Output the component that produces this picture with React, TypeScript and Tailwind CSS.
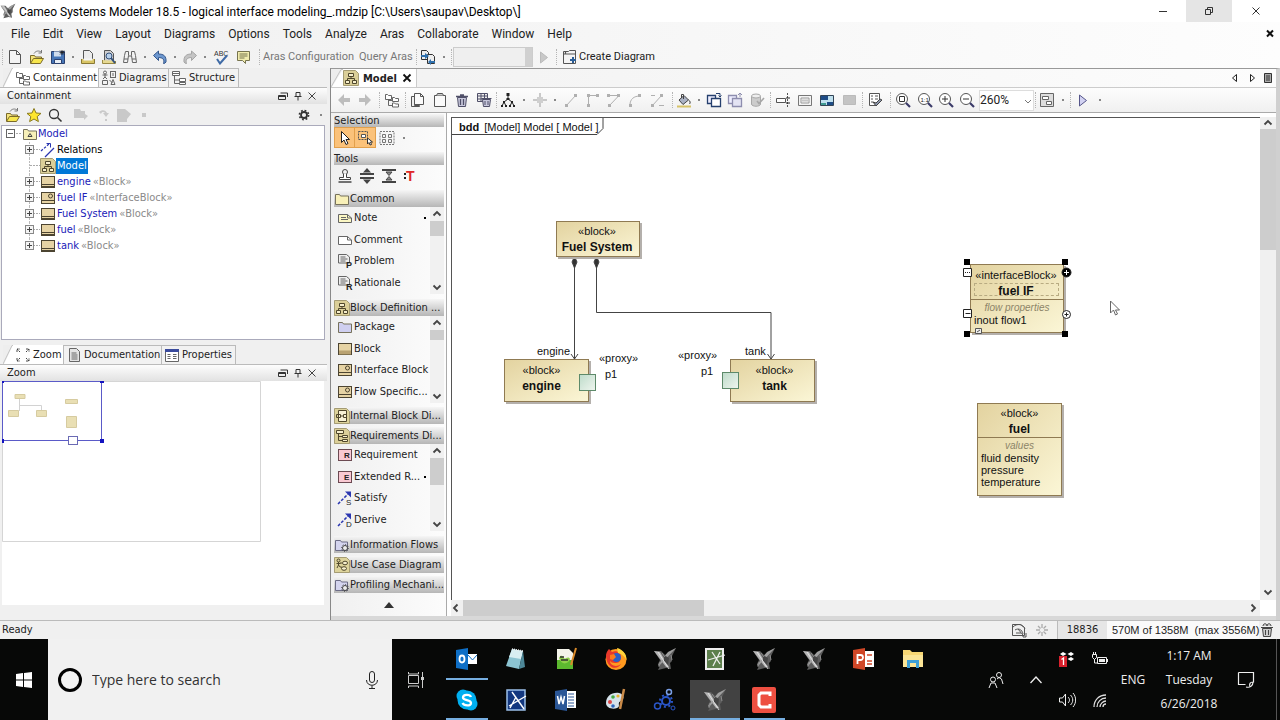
import type { ReactNode } from "react";

const UI = "font-['DejaVu_Sans_Condensed','DejaVu_Sans',sans-serif]";
const SEGOE = "font-['Open_Sans','Noto_Sans',sans-serif]";
const BAR = "font-['Roboto','Open_Sans',sans-serif]";
const ARIAL = "font-['Liberation_Sans',Arial,sans-serif]";

interface SvgProps {
  w?: number;
  h?: number;
  stroke?: string;
  className?: string;
  children: ReactNode;
}

function Svg({ w = 16, h = 16, stroke = "#555", className = "", children }: SvgProps) {
  return (
    <svg
      width={w}
      height={h}
      viewBox={`0 0 ${w} ${h}`}
      fill="none"
      stroke={stroke}
      className={`shrink-0 ${className}`}
      aria-hidden="true"
    >
      {children}
    </svg>
  );
}

/* ---------- main toolbar icons ---------- */

const NewIcon = () => (
  <Svg><path d="M2.500 1.500h7l4 4v9h-11z" fill="#f3f3f3" /><path d="M9.500 1.500v4h4" /></Svg>
);
const OpenIcon = () => (
  <Svg stroke="#7a6a2a">
    <path d="M1.500 14V6.500h4l1 1.500h6v3" fill="#f3e27c" />
    <path d="M1.500 14.500l3-5h10l-3 5z" fill="#f7e64d" />
    <path d="M5 4.500c2-3 5-3 7-1.500M12.500 1v3h-3" stroke="#777" />
  </Svg>
);
const SaveIcon = () => (
  <Svg stroke="#2b4170">
    <path d="M1.500 2.500h13v12h-13z" fill="#4676b8" />
    <path d="M4 2.500h7v5h-7z" fill="#cfdced" stroke="none" />
    <path d="M4.500 10.500h7v4h-7z" fill="#e8eef6" />
    <path d="M12 1v5M9.500 3.500h5M10 1.500l4 4M14 1.500l-4 4" stroke="#222" strokeWidth=".8" />
  </Svg>
);
const PrintIcon = () => (
  <Svg>
    <path d="M3.500 1.500h6l3 3v8h-9z" fill="#ececec" />
    <path d="M1.500 10v4.500h13V10" fill="#d9c566" stroke="#8a7a35" />
    <path d="M3.500 9.500h9v2h-9z" fill="#f4f4f4" stroke="none" />
  </Svg>
);
const PreviewIcon = () => (
  <Svg>
    <path d="M3.500 1.500h6l3 3v8h-9z" fill="#cfcfcf" />
    <path d="M1.500 11v3.500h13V12" stroke="#9a8a45" fill="#e6d991" />
    <circle cx="8" cy="7" r="3" fill="#b8d0ea" stroke="#33517c" />
    <path d="M10 9l4 5" stroke="#33517c" strokeWidth="2" />
  </Svg>
);
const FindIcon = () => (
  <Svg stroke="#666">
    <path d="M3.500 2.500h3v4l-1 7h-4l1-7zM12.500 2.500h-3v4l1 7h4l-1-7z" fill="#f2f2f2" />
    <path d="M6.500 7h3M2 10h4M10 10h4" />
  </Svg>
);
const UndoIcon = () => (
  <Svg stroke="#34578c">
    <path d="M1.500 6.500l5-4.500v3c5 0 8 2 7.500 8-.5 1-1.500 1.500-2.500 1.500 1.500-4-1-6-5-6v3z" fill="#6d97cf" />
  </Svg>
);
const RedoIcon = () => (
  <Svg stroke="#a5a5a5">
    <path d="M14.500 6.500l-5-4.500v3c-5 0-8 2-7.500 8 .5 1 1.500 1.500 2.500 1.500-1.500-4 1-6 5-6v3z" fill="#c4c4c4" />
  </Svg>
);
const SpellIcon = () => (
  <Svg stroke="#444">
    <text x="1" y="7" fontSize="7" fill="#333" stroke="none" className="font-['Liberation_Sans',sans-serif]">ABC</text>
    <path d="M4 10l3 4.500 7-8" stroke="#3f6ba6" strokeWidth="2" />
  </Svg>
);
const NoteBubbleIcon = () => (
  <Svg stroke="#77744f">
    <path d="M2.500 2.500h12v9h-4v3l-3-3h-5z" fill="#f1ecae" />
    <path d="M4.500 5h8M4.500 7h8M4.500 9h5" />
  </Svg>
);
const CompareIcon = () => (
  <Svg stroke="#333">
    <path d="M1.500 1.500h5l2 2v7h-7z" fill="#eee" />
    <path d="M7.500 5.500h5l2 2v7h-7z" fill="#eee" />
    <path d="M1 6h4V4l4 3-4 3V8H1z" fill="#2f70ad" stroke="none" />
    <path d="M15 12h-4v-2l-3 3 3 3v-2h4z" fill="#2f70ad" stroke="none" />
  </Svg>
);
const CreateDiagramIcon = () => (
  <Svg>
    <path d="M1.500 2.500h5l1-1h6v13h-12z" fill="#f4f4f4" />
    <path d="M1.500 5h12M3.500 2.500v2.500" strokeWidth="1.200" />
    <path d="M11 8v6M8 11h6" stroke="#2c5e96" strokeWidth="2" />
  </Svg>
);
const PlayIcon = ({ fill, stroke }: { fill: string; stroke: string }) => (
  <Svg stroke={stroke}><path d="M4.500 3l7 5.500-7 5.500z" fill={fill} /></Svg>
);

/* ---------- tree and tab icons ---------- */

const FoldersIcon = () => (
  <Svg stroke="#666">
    <path d="M1.500 2.500h2l1 1h3v4h-6zM8.500 5.500h2l1 1h3v3h-6zM8.500 11h2l1 1h3v3h-6z" fill="#fff" />
    <path d="M4.500 7.500v6h4M4.500 8.500h4" />
  </Svg>
);
const DiagramsIcon = () => (
  <Svg stroke="#666">
    <circle cx="4" cy="2.500" r="1.500" /><path d="M4 4v3M1.500 5h5M2 9l2-2 2 2" />
    <rect x="9.500" y="1.500" width="5" height="6" /><path d="M12 3v3" />
    <path d="M1.500 10.500h5v4h-5zM8.500 10l3 3M12 9.500l2 5h-4z" />
  </Svg>
);
const StructureIcon = () => (
  <Svg stroke="#666">
    <path d="M1.500 1.500h7v4h-7zM8.500 8.500h6v3h-6zM8.500 12.500h6v2h-6z" fill="#fff" />
    <path d="M1.500 3.500h7M3.500 5.500v8h5M3.500 10h5" />
  </Svg>
);
const StarIcon = () => (
  <Svg stroke="#8a7b1e"><path d="M8 1.500l2 4.500 5 .4-3.800 3.200 1.200 5L8 12l-4.400 2.600 1.200-5L1 6.400 6 6z" fill="#ffe62e" /></Svg>
);
const SearchIcon = () => (
  <Svg stroke="#333"><circle cx="7" cy="7" r="4.500" strokeWidth="1.300" /><path d="M10.500 10.500l4 4" strokeWidth="1.600" /></Svg>
);
const GearIcon = () => (
  <Svg stroke="#333">
    <circle cx="8" cy="8" r="3" strokeWidth="1.800" />
    <circle cx="8" cy="8" r="4.600" strokeWidth="1.600" strokeDasharray="1.800 1.810" />
  </Svg>
);
const GhostIcon = ({ d }: { d: string }) => <Svg stroke="none"><path d={d} fill="#c9c9c9" /></Svg>;

const PackageIcon = ({ fill = "#f8f0b8", mark = false }: { fill?: string; mark?: boolean }) => (
  <Svg w={14} h={14} stroke="#77725c">
    <path d="M.5 2.500h4l1 1.500h8v8.500h-13z" fill={fill} />
    {mark && <path d="M5 9.500l2-3 2 3z" stroke="#444" />}
  </Svg>
);
const BlockIcon = ({ variant = "block" }: { variant?: "block" | "interface" | "palette" }) => (
  <Svg w={14} h={14} stroke="#4c4431">
    <rect x=".5" y="1.500" width="13" height="11" fill="#e6d3a4" />
    {variant === "palette" && <path d="M1 8.500h12v4h-12z" fill="#b9a272" stroke="none" />}
    {variant !== "palette" && <path d="M.5 9.500h13" />}
    {variant === "block" && <path d="M.5 11.500h13" />}
    {variant === "interface" && <circle cx="9.500" cy="5" r="2" />}
  </Svg>
);
const BddIcon = () => (
  <Svg w={16} h={16} stroke="#4f472c">
    <path d="M.5.5h12l3 3v12h-15z" fill="#dbcf98" stroke="#a59c74" />
    <path d="M5.500 3.500h5v3h-5zM2.500 10.500h4v3h-4zM9.500 10.500h4v3h-4z" fill="#f6efcd" />
    <path d="M8 6.500v2M4.500 10.500v-2h7v2" />
  </Svg>
);
const IbdIcon = () => (
  <Svg w={16} h={16} stroke="#4f472c">
    <path d="M.5.5h12l3 3v12h-15z" fill="#ddd39b" stroke="#a59c74" />
    <path d="M4.500 2.500h8v11h-8z" fill="#f8f3d7" /><path d="M2.500 6.500h4v3h-4zM9.500 6.500h3v3h-3zM6.500 8h3" />
  </Svg>
);
const ReqDiagramIcon = () => (
  <Svg w={16} h={16} stroke="#4f472c">
    <path d="M.5.5h12l3 3v12h-15z" fill="#dbcf98" stroke="#a59c74" />
    <path d="M2.500 2.500h7v3h-7zM8.500 7.500h5v2h-5zM8.500 11.500h5v2h-5z" fill="#f6efcd" />
    <path d="M4.500 5.500v7h4M4.500 8.500h4" />
  </Svg>
);
const UseCaseIcon = () => (
  <Svg w={16} h={16} stroke="#4f472c">
    <path d="M.5.5h12l3 3v12h-15z" fill="#ddd39b" stroke="#a59c74" />
    <circle cx="4.500" cy="3.500" r="1.500" /><path d="M4.500 5v3M2.500 6.500h4M3 11l1.500-3 2 2.500" />
    <ellipse cx="11" cy="6" rx="2.500" ry="1.800" fill="#f6efcd" /><ellipse cx="10" cy="11.500" rx="2.500" ry="1.800" fill="#f6efcd" />
    <path d="M6 6h2M6.500 9.500l1.500 1" />
  </Svg>
);
const ProfileIcon = () => (
  <Svg w={16} h={16} stroke="#6c6c86">
    <path d="M1.500 3.500h5l1 1.500h6v8.500h-12z" fill="#d4d4ee" />
    <circle cx="11" cy="11" r="2.500" fill="#eee" stroke="#444" />
    <circle cx="11" cy="11" r="3.500" stroke="#444" strokeDasharray="1 1.700" />
  </Svg>
);
const RelationIcon = ({ letter }: { letter?: string }) => (
  <Svg stroke="#2a36b0">
    {letter ? (
      <>
        <path d="M1 14L11 4" strokeDasharray="3 1.500" strokeWidth="1.500" />
        <path d="M8 1.500h6v6z" fill="#2a36b0" stroke="none" />
        <text x="9" y="15" fontSize="8" fill="#222" stroke="none" className="font-['Liberation_Sans',sans-serif]">{letter}</text>
      </>
    ) : (
      <>
        <path d="M1 9l8-7" strokeDasharray="2.500 1.500" strokeWidth="1.300" /><path d="M6.500 1.500h4v4" />
        <path d="M5 15l9-9" strokeWidth="1.300" />
      </>
    )}
  </Svg>
);
const NoteIcon = ({ kind }: { kind: "note" | "comment" | "P" | "R" }) => (
  <Svg stroke="#666">
    {kind === "note" || kind === "comment" ? (
      <>
        <path d="M1.500 4.500h9l4 3.500v4.500h-13z" fill={kind === "note" ? "#fbf7c4" : "#fff"} />
        <path d="M10.500 4.500V8h4" />
        {kind === "note" && <path d="M4 7.500h5M4 9.500h7" />}
      </>
    ) : (
      <>
        <path d="M1.500 1.500h8l3 2.500v6h-11z" fill="#efefef" />
        <path d="M3.500 4h5M3.500 6h7M3.500 8h5" />
        <text x="9" y="15" fontSize="9" fontWeight="700" fill="#222" stroke="none" className="font-['Liberation_Sans',sans-serif]">{kind}</text>
      </>
    )}
  </Svg>
);
const ReqIcon = ({ letter }: { letter: string }) => (
  <Svg w={14} h={14} stroke="#6c4a52">
    <rect x=".5" y="1.500" width="13" height="11" fill="#f9c9d2" />
    <text x="6" y="10" fontSize="8" fontWeight="700" fill="#222" stroke="none" className="font-['Liberation_Sans',sans-serif]">{letter}</text>
  </Svg>
);

/* ---------- diagram toolbar icons ---------- */

const ArrowIcon = ({ flip = false }: { flip?: boolean }) => (
  <Svg stroke="none">
    <path d={flip ? "M14 8L8 2v4H2v4h6v4z" : "M2 8l6-6v4h6v4H8v4z"} fill="#bdbdbd" />
  </Svg>
);
const CopyIcon = () => (
  <Svg><path d="M1.500 4.500h3v9h5v1h-8z" fill="#eee" /><path d="M4.500 1.500h6l3 3v8h-9z" fill="#fafafa" /><path d="M10.500 1.500v3h3" /></Svg>
);
const PasteIcon = () => (
  <Svg><path d="M2.500 3.500h11v11h-11z" fill="#fafafa" /><path d="M4.500 3.500l1-2h5l1 2" fill="#ccc" /></Svg>
);
const TrashIcon = () => (
  <Svg stroke="#4f4f68">
    <path d="M3.500 5.500h9l-1 9h-7z" fill="#c9c9dd" /><path d="M2 4.500h12M6 3h4M6.500 7v6M9.500 7v6" strokeWidth="1.300" />
  </Svg>
);
const TrashAllIcon = () => (
  <Svg stroke="#4f4f68">
    <path d="M1.500 1.500h10v8h-10z" fill="#eee" /><path d="M1.500 4h10M1.500 7h10M5 1.500v8M8.500 1.500v8" />
    <path d="M6.500 7.500h8l-1 7h-6z" fill="#c9c9dd" /><path d="M5.500 6.500h10M9 9v4M12 9v4" />
  </Svg>
);
const LayoutTreeIcon = () => (
  <Svg stroke="#222">
    <path d="M8 3v4M8 7l-4 3M8 7l4 3M4 10l-2 4M4 10l2 4M12 10l-2 4M12 10l2 4" />
    <path d="M6.500 1h3v3h-3zM6.500 6h3v2h-3zM3 9h2v2H3zM11 9h2v2h-2zM1 13h2v2H1zM5 13h2v2H5zM9 13h2v2H9zM13 13h2v2h-2z" fill="#222" stroke="none" />
  </Svg>
);
const AlignIcon = () => (
  <Svg stroke="#b9b9b9"><path d="M8 1v14M1 8h14" strokeWidth="1.500" /><path d="M5 5h6v6H5z" fill="#cfcfcf" stroke="none" /></Svg>
);
const PathIcon = ({ d, ends }: { d: string; ends: string }) => (
  <Svg stroke="#b0b0b0">
    <path d={d} />
    <path d={ends} fill="#b0b0b0" stroke="none" />
  </Svg>
);
const BucketIcon = () => (
  <Svg stroke="#444">
    <path d="M3 8l5-4.500 4.500 4.500L7 12.500z" fill="#aab2c4" /><path d="M5.500 6V2.500h2V7M12.500 8c2 1 2 3 1 4" />
    <path d="M1 14.500h14" stroke="#d6c267" strokeWidth="2" />
  </Svg>
);
const FrontIcon = ({ front = false }: { front?: boolean }) => (
  <Svg stroke={front ? "#26406e" : "#8d8dae"}>
    <path d="M1.500 3.500h8v8h-8z" fill="#eef" strokeWidth="1.300" /><path d="M5.500 6.500h9v8h-9z" fill={front ? "#fff" : "#e3e3f3"} strokeWidth="1.300" />
    <path d={front ? "M10 1.500h4v3M12.500 3.500l1.500 1.500 1.500-1.500" : "M11 3l2-2 2 2M13 1v4"} />
  </Svg>
);
const CylinderIcon = () => (
  <Svg stroke="#a8a8a8"><path d="M2.500 4v8c0 3 9 3 9 0V4" fill="#ccc" /><ellipse cx="7" cy="4" rx="4.500" ry="2" fill="#eee" /><path d="M8 9l2 2.500L15 6" strokeWidth="1.600" /></Svg>
);
const SplitIcon = () => (
  <Svg><path d="M1.500 6.500h9v4h-9z" fill="#fff" /><path d="M12.500 1v14" strokeDasharray="2 1" /><path d="M11 6h4M11 11h4" stroke="#222" /></Svg>
);
const FrameIcon = () => (
  <Svg stroke="#777"><path d="M1.500 3.500h13v10h-13z" fill="#f3f3f3" /><path d="M4 6h8v5H4zM6 7.500v2M8 7.500v2M10 7.500v2" stroke="#999" /></Svg>
);
const ImageIcon = () => (
  <Svg stroke="#345"><path d="M1.500 3.500h13v10h-13z" fill="#bfe0ee" /><path d="M2 4h7v4H2zM8 10h6v3H8z" fill="#1e4c86" stroke="none" /><path d="M2 11h5v2H2z" fill="#3f9a92" stroke="none" /></Svg>
);
const GrayBoxIcon = () => <Svg stroke="#bbb"><path d="M2.500 3.500h12v9h-12z" fill="#c4c4c4" /></Svg>;
const ValidateIcon = () => (
  <Svg><path d="M2.500 1.500h10v9l-4 3h-6z" fill="#fff" /><path d="M4 4h2M8 4h3M4 7h2M8 7h3M4 10h2" /><path d="M6 10l3 4 6-6-2-1-4 4z" fill="#8c96ab" stroke="#444" /></Svg>
);
const ZoomIcon = ({ mark }: { mark: string }) => (
  <Svg>
    <circle cx="7" cy="7" r="5.500" fill="#fff" />
    {mark === "1:1" ? (
      <text x="3.500" y="9.500" fontSize="6" fill="#222" stroke="none" className="font-['Liberation_Sans',sans-serif]">1:1</text>
    ) : (
      <path d={mark} stroke="#333" />
    )}
    <path d="M11 11l4 4" stroke="#3a3a68" strokeWidth="2.200" />
  </Svg>
);
const ViewIcon = () => (
  <Svg stroke="#666"><path d="M1.500 1.500h13v13h-13z" fill="#ddd" /><path d="M3.500 4.500h6v3h-6zM7.500 9.500h5v3h-5z" fill="#fff" /></Svg>
);

/* ---------- palette tool icons ---------- */

const CursorIcon = () => <Svg stroke="#222"><path d="M4.500 1.500v11l2.500-2.500 2 4.500 2-1-2-4h3.500z" fill="#fff" /></Svg>;
const MarqueeIcon = () => (
  <Svg stroke="#555"><path d="M1.500 1.500h9v8h-9z" strokeDasharray="2 1" /><path d="M4.500 4.500h4v3h-4z" fill="#fff" /><path d="M10.500 8v6l1.500-1.500 1 2.500 1.500-.5-1-2.500h2z" fill="#fff" stroke="#333" /></Svg>
);
const GridSelectIcon = () => (
  <Svg stroke="#777"><path d="M1 1.500h14v13H1z" strokeDasharray="2 1" /><path d="M3.500 4.500h3v3h-3zM9.500 4.500h3v3h-3zM3.500 9.500h3v3h-3zM9.500 9.500h3v3h-3z" /></Svg>
);
const StampIcon = () => (
  <Svg stroke="#444"><circle cx="8" cy="4" r="2.500" /><path d="M6.500 6v3.500h-4v2h11v-2h-4V6" fill="#fff" /><path d="M1.500 14h13" strokeWidth="1.500" /></Svg>
);
const SpreadIcon = () => (
  <Svg stroke="#444"><path d="M1 6h14M1 10h14" strokeWidth="2" /><path d="M8 0l4 4.500H4zM8 16l4-4.500H4z" fill="#444" stroke="none" /></Svg>
);
const PinchIcon = () => (
  <Svg stroke="#444"><path d="M1 2h14M1 14h14" strokeWidth="2" /><path d="M8 7.500L5 4h6zM8 8.500L5 12h6z" fill="#888" /></Svg>
);
const TextToolIcon = () => (
  <Svg stroke="none"><path d="M2 5h2v2H2zM2 9h2v2H2z" fill="#222" /><text x="4" y="13" fontSize="14" fontWeight="700" fill="#e02828" className="font-['Liberation_Sans',sans-serif]">T</text></Svg>
);

/* ---------- shared bits ---------- */

const Grip = () => <span className="mx-px h-4 w-px shrink-0 border-l border-dotted border-[#b5b5b5]" />;

function ToolButton({ label, children, wide = false }: { label: string; children: ReactNode; wide?: boolean }) {
  return (
    <button aria-label={label} className={`flex h-5 shrink-0 items-center justify-center ${wide ? "w-[22px]" : "w-5"}`}>
      {children}
    </button>
  );
}

function More({ label, tight = false }: { label: string; tight?: boolean }) {
  return (
    <button aria-label={label} className={`flex h-5 shrink-0 items-center justify-center ${tight ? "w-[10px]" : "w-3"}`}>
      <span className="h-0.5 w-0.5 bg-[#888]" />
    </button>
  );
}

function Chevron({ dir }: { dir: "up" | "down" | "left" | "right" }) {
  const d = {
    up: "M1.500 6.500L5 3l3.500 3.500",
    down: "M1.500 3.500L5 7l3.500-3.500",
    left: "M6.500 1.500L3 5l3.500 3.500",
    right: "M3.500 1.500L7 5l-3.500 3.500",
  }[dir];
  return <Svg w={10} h={10} stroke="#444"><path d={d} strokeWidth="1.800" /></Svg>;
}

function PaneHeader({ title }: { title: string }) {
  return (
    <div className="flex h-4 items-center bg-linear-to-b from-[#fdfdfd] to-[#e2e2e2] pl-[7px]">
      <h2 className="flex-1">{title}</h2>
      <button aria-label={`Float ${title}`} className="w-[15px]">
        <Svg w={10} h={10} stroke="#333"><path d="M.5 4.500h7v4h-7zM2.500 2h7v4M.5 5.500h7" /></Svg>
      </button>
      <button aria-label={`Pin ${title}`} className="w-[14px]">
        <Svg w={10} h={10} stroke="#333"><path d="M3 1.500h4v4H3zM1.500 5.500h7M5 6v3.500" /></Svg>
      </button>
      <button aria-label={`Close ${title}`} className="mr-2 w-3">
        <Svg w={10} h={10} stroke="#444"><path d="M1.500 1.500l7 7M8.500 1.500l-7 7" /></Svg>
      </button>
    </div>
  );
}

function PaneTab({ label, icon, active = false, width }: { label: string; icon: ReactNode; active?: boolean; width: string }) {
  return (
    <button
      className={`flex h-[19px] shrink-0 items-center gap-[2px] border-r border-[#bbb] ${width} ${
        active ? "bg-white" : "border-t bg-[#f2f2f2] pl-[2px]"
      }`}
    >
      {active && <Svg w={10} h={19} stroke="#c4c4c4"><path d="M0 0h10L1 19H0z" fill="#eee" stroke="none" /><path d="M0 19L9 .5h1" /></Svg>}
      {icon}
      <span>{label}</span>
    </button>
  );
}

/* ---------- top bars ---------- */

const MENUS = ["File", "Edit", "View", "Layout", "Diagrams", "Options", "Tools", "Analyze", "Aras", "Collaborate", "Window", "Help"];

function JetIcon({ size = 24 }: { size?: number }) {
  return (
    <svg width={size} height={size} viewBox="0 0 24 24" aria-hidden="true" className="shrink-0">
      <path d="M1 4l7 0 4 4 4-3 7-4-4 8 0 5-2 2 1 6-5-1-8 2 2-4-2-2 2-4z" fill="#5c5c5c" />
      <path d="M1 4l6 1 9 15-3 0z" fill="#b4b4b4" />
      <path d="M23 1l-8 4-10 13 1 1z" fill="#a0a0a0" />
      <path d="M11 8l5 3-1 7-4-4z" fill="#444" />
      <path d="M5 5l11 17" stroke="#eee" strokeWidth=".8" />
      <path d="M18 8l1 5M7 15l-1 5M9 6l3 4" stroke="#8c8c8c" />
    </svg>
  );
}

function TitleBar() {
  return (
    <header className={`flex h-[22px] shrink-0 items-center bg-white text-[12px] text-black ${BAR}`}>
      <span className="w-[19px]"><JetIcon size={16} /></span>
      <h1 className="flex-1 pt-px whitespace-nowrap">Cameo Systems Modeler 18.5 - logical interface modeling_.mdzip [C:\Users\saupav\Desktop\]</h1>
      <button aria-label="Minimize" className="flex h-full w-[47px] items-center justify-center"><Svg w={10} h={10} stroke="#333"><path d="M1 5.500h8" /></Svg></button>
      <button aria-label="Restore" className="flex h-full w-[46px] items-center justify-center bg-[#e5e5e5]"><Svg w={10} h={10} stroke="#333"><path d="M1.500 3.500h5v5h-5zM3.500 3.500v-2h5v5h-2" /></Svg></button>
      <button aria-label="Close" className="mr-px flex h-full w-[47px] items-center justify-center"><Svg w={10} h={10} stroke="#333"><path d="M1.500 1.500l7 7M8.500 1.500l-7 7" /></Svg></button>
    </header>
  );
}

function MenuBar() {
  return (
    <nav className={`flex h-6 shrink-0 items-center gap-[13px] bg-linear-to-r from-[#f0f0f0] to-[#fdfdfd] pl-[11px] text-[12px] text-[#222] ${BAR}`}>
      {MENUS.map((m) => (
        <button key={m}>{m}</button>
      ))}
      <button aria-label="Close project" className="mr-[5px] ml-auto">
        <Svg w={10} h={10} stroke="#111"><path d="M2 1.500l6 6M8 1.500l-6 6" strokeWidth="2" /></Svg>
      </button>
    </nav>
  );
}

function MainToolbar() {
  return (
    <div className={`flex h-[22px] shrink-0 items-center bg-linear-to-r from-[#f0f0f0] to-[#fdfdfd] text-[11px] ${BAR}`}>
      <span className="w-px" />
      <Grip />
      <ToolButton wide label="New project"><NewIcon /></ToolButton>
      <ToolButton wide label="Open project"><OpenIcon /></ToolButton>
      <ToolButton label="Save project"><SaveIcon /></ToolButton>
      <More tight label="Save options" />
      <ToolButton label="Print"><PrintIcon /></ToolButton>
      <ToolButton wide label="Print preview"><PreviewIcon /></ToolButton>
      <ToolButton label="Find"><FindIcon /></ToolButton>
      <More tight label="Find options" />
      <ToolButton label="Undo"><UndoIcon /></ToolButton>
      <More tight label="Undo history" />
      <ToolButton label="Redo"><RedoIcon /></ToolButton>
      <More tight label="Redo history" />
      <ToolButton wide label="Spelling"><SpellIcon /></ToolButton>
      <ToolButton wide label="Notes"><NoteBubbleIcon /></ToolButton>
      <span className="w-1" />
      <Grip />
      <div className="flex w-[154px] items-center gap-[5px] pl-[2px] whitespace-nowrap text-[#777]">
        <button>Aras Configuration</button>
        <button>Query Aras</button>
      </div>
      <Grip />
      <ToolButton label="Compare"><CompareIcon /></ToolButton>
      <More label="Compare options" />
      <Grip />
      <div className="relative h-5 w-20 border border-[#ccc] bg-[#efefef]">
        <select aria-label="Configuration" disabled className="h-full w-full appearance-none" />
        <span className="pointer-events-none absolute top-0 right-0 flex h-full w-[7px] items-center bg-[#d0d0d0]" />
      </div>
      <ToolButton wide label="Run"><PlayIcon fill="#c8c8c8" stroke="#bbb" /></ToolButton>
      <Grip />
      <button className="ml-1 flex items-center gap-px whitespace-nowrap text-[#222]">
        <CreateDiagramIcon />
        Create Diagram
      </button>
    </div>
  );
}

/* ---------- left column ---------- */

const BLOCKS = [
  { name: "Relations", type: "", icon: <RelationIcon /> },
  { name: "Model", type: "", icon: <BddIcon /> },
  { name: "engine", type: "«Block»", icon: <BlockIcon /> },
  { name: "fuel IF", type: "«InterfaceBlock»", icon: <BlockIcon variant="interface" /> },
  { name: "Fuel System", type: "«Block»", icon: <BlockIcon /> },
  { name: "fuel", type: "«Block»", icon: <BlockIcon /> },
  { name: "tank", type: "«Block»", icon: <BlockIcon /> },
];

function Containment() {
  return (
    <section className="flex flex-1 flex-col">
      <div className="flex border-b border-[#bbb] pl-[3px]">
        <PaneTab active width="w-[96px]" label="Containment" icon={<FoldersIcon />} />
        <PaneTab width="w-[70px]" label="Diagrams" icon={<DiagramsIcon />} />
        <PaneTab width="w-[70px]" label="Structure" icon={<StructureIcon />} />
      </div>
      <PaneHeader title="Containment" />
      <div className="flex h-[21px] items-center bg-[#f0f0f0] pl-[2px]">
        <ToolButton wide label="Open in new tree"><OpenIcon /></ToolButton>
        <ToolButton label="Favorites"><StarIcon /></ToolButton>
        <ToolButton wide label="Quick find"><SearchIcon /></ToolButton>
        <span className="w-[7px]" />
        <GhostIcon d="M1 2h6l1 2h4v3l3 2-4 4v-2H1z" />
        <span className="w-[7px]" />
        <GhostIcon d="M3 5c3-3 7-2 8 1h2l-3 4-3-4h2c-1-1-3-2-4 1zM9 12h2v2H9z" />
        <span className="w-1" />
        <GhostIcon d="M1 2h8l6 5-4 5v3H1z" />
        <span className="ml-[10px] h-1 w-1 bg-[#c9c9c9]" />
        <span className="flex-1" />
        <ToolButton wide label="Options"><GearIcon /></ToolButton>
        <More label="Option menu" />
      </div>
      <ul className="mr-[2px] ml-px flex-1 border border-[#aab] bg-white">
        <li>
          <div className="flex h-4 items-center">
            <Svg w={21} h={16} stroke="#666"><rect x="4.500" y="3.500" width="8" height="8" fill="#fff" /><path d="M6 7.500h5" /><path d="M14 7.500h6" stroke="#aaa" strokeDasharray="2 1" /></Svg>
            <PackageIcon mark />
            <button className="px-px text-[#2020b8]">Model</button>
          </div>
          <ul>
            {BLOCKS.map((b, i) => (
              <li key={b.name} className="flex h-4 items-center">
                <span className="w-[21px]" />
                <Svg w={17} h={16} stroke="#888">
                  <path d={i === 6 ? "M6.500 0v8" : "M6.500 0v16"} stroke="#bbb" strokeDasharray="2 1" />
                  <path d="M7 7.500h10" stroke="#aaa" strokeDasharray="2 1" />
                  {i !== 1 && <><rect x="2.500" y="3.500" width="8" height="8" fill="#f4f4f4" /><path d="M4 7.500h5M6.500 5v5" stroke="#444" /></>}
                </Svg>
                <span className="flex w-4 justify-center">{b.icon}</span>
                {b.name === "Model" ? (
                  <button className="h-4 bg-[#0078d7] px-px text-white">Model</button>
                ) : (
                  <button className={`px-px ${i === 0 ? "text-black" : "text-[#2020b8]"}`}>{b.name}</button>
                )}
                {b.type && <span className="ml-px text-[#8a8a8a]">{b.type}</span>}
              </li>
            ))}
          </ul>
        </li>
      </ul>
    </section>
  );
}

function ZoomPane() {
  return (
    <section className="mt-[5px] flex flex-col">
      <div className="flex border-b border-[#bbb] pl-[3px]">
        <PaneTab
          active
          width="w-[61px]"
          label="Zoom"
          icon={<Svg stroke="#444"><path d="M2 5V2h3M2 2l3 3M11 2h3v3M14 2l-3 3M2 11v3h3M2 14l3-3M11 14h3v-3M14 14l-3-3" strokeDasharray="2 .7" /></Svg>}
        />
        <PaneTab
          width="w-[98px]"
          label="Documentation"
          icon={<Svg stroke="#666"><path d="M3.500 1.500h7l3 3v10h-10z" fill="#e4e4e4" /><path d="M5.500 6h5M5.500 8h6M5.500 10h6M5.500 12h6" /></Svg>}
        />
        <PaneTab
          width="w-[74px]"
          label="Properties"
          icon={<Svg stroke="#666"><path d="M1.500 2.500h13v12h-13z" fill="#fff" /><path d="M1 2h14v3H1z" fill="#3a4a9c" stroke="none" /><path d="M3.500 7.500h3M9 7.500h3.500M3.500 9.500h3M9 9.500h3.500M3.500 11.500h3M9 11.500h3.500" /></Svg>}
        />
      </div>
      <PaneHeader title="Zoom" />
      <div className="mr-[3px] ml-[2px] h-56 bg-white">
        <svg width="262" height="164" viewBox="0 0 262 164" className="block" aria-label="Diagram overview">
          <path d="M.5.5h258v160H.5z" fill="none" stroke="#d5d5d5" />
          <path d="M17.500 18v12M17.500 24.500h22v5" fill="none" stroke="#d2d2d2" />
          <g fill="#e9dfb4" stroke="#d6cba0">
            <path d="M13 13.500h10v4H13zM6.500 29.500h10v6h-10zM34.500 29.500h10v6h-10zM63.500 18.500h12v4h-12zM64.500 35.500h10v11h-10z" />
          </g>
          <path d="M0 .5h99.500v59H.5V0" fill="none" stroke="#5a5ac8" />
          <path d="M0 0h2v2H0zM98 0h4v2h-4zM0 58h2v4H0zM98 58h4v4h-4z" fill="#1414c0" />
          <rect x="66.500" y="55.500" width="9" height="8" fill="#fff" stroke="#6a6ab4" />
        </svg>
      </div>
      <div className="h-[15px]" />
    </section>
  );
}

/* ---------- palette ---------- */

interface PaletteItem {
  label: string;
  icon: ReactNode;
  more?: boolean;
}

const COMMON: PaletteItem[] = [
  { label: "Note", icon: <NoteIcon kind="note" />, more: true },
  { label: "Comment", icon: <NoteIcon kind="comment" /> },
  { label: "Problem", icon: <NoteIcon kind="P" /> },
  { label: "Rationale", icon: <NoteIcon kind="R" /> },
];
const BLOCK_DEFINITION: PaletteItem[] = [
  { label: "Package", icon: <PackageIcon fill="#cfcff0" /> },
  { label: "Block", icon: <BlockIcon variant="palette" /> },
  { label: "Interface Block", icon: <BlockIcon variant="interface" /> },
  { label: "Flow Specific...", icon: <BlockIcon variant="interface" /> },
];
const REQUIREMENTS: PaletteItem[] = [
  { label: "Requirement", icon: <ReqIcon letter="R" /> },
  { label: "Extended R...", icon: <ReqIcon letter="E" />, more: true },
  { label: "Satisfy", icon: <RelationIcon letter="S" /> },
  { label: "Derive", icon: <RelationIcon letter="D" /> },
];

function SectionHead({ label, icon }: { label: string; icon?: ReactNode }) {
  return (
    <button
      className={`flex w-full items-center bg-linear-to-b from-[#f6f6f6] to-[#b6b6b6] whitespace-nowrap ${icon ? "h-[17px]" : "h-[13px]"}`}
    >
      {icon && <span className="flex w-4 justify-center">{icon}</span>}
      {label}
    </button>
  );
}

function PaletteGroup({ items, thumb }: { items: PaletteItem[]; thumb: string }) {
  return (
    <div className="flex h-[87px]">
      <ul className="grid flex-1 grid-rows-4">
        {items.map((item) => (
          <li key={item.label} className="flex items-center">
            <button className="flex flex-1 items-center gap-px pl-[3px] whitespace-nowrap">
              <span className="flex w-4 justify-center">{item.icon}</span>
              {item.label}
            </button>
            {item.more && <span className="mr-1 h-0.5 w-0.5 bg-black" />}
          </li>
        ))}
      </ul>
      <div className="flex w-[14px] flex-col items-center bg-[#f1f1f1]">
        <span className="flex h-[14px] items-center"><Chevron dir="up" /></span>
        <span className={`w-full bg-[#cdcdcd] ${thumb}`} />
        <span className="mt-auto flex h-[14px] items-center"><Chevron dir="down" /></span>
      </div>
    </div>
  );
}

function Palette() {
  return (
    <aside className="flex w-[115px] shrink-0 flex-col bg-linear-to-r from-[#f0f0f0] to-[#fcfcfc] pt-px pr-[2px] pl-[3px]">
      <SectionHead label="Selection" />
      <div className="flex h-[21px] items-center">
        <button aria-label="Select" className="flex h-full w-[21px] items-center justify-center border border-[#e2a04c] bg-[#fbc27a]"><CursorIcon /></button>
        <button aria-label="Marquee select" className="flex h-full w-[21px] items-center justify-center border border-l-0 border-[#e2a04c] bg-[#fbc27a]"><MarqueeIcon /></button>
        <ToolButton wide label="Select group"><GridSelectIcon /></ToolButton>
        <More label="Selection options" />
      </div>
      <div className="mt-1"><SectionHead label="Tools" /></div>
      <div className="flex h-[25px] items-center pb-[3px]">
        <ToolButton wide label="Sticky"><StampIcon /></ToolButton>
        <ToolButton wide label="Spread"><SpreadIcon /></ToolButton>
        <ToolButton wide label="Pinch"><PinchIcon /></ToolButton>
        <ToolButton label="Text"><TextToolIcon /></ToolButton>
      </div>
      <SectionHead label="Common" icon={<PackageIcon />} />
      <PaletteGroup items={COMMON} thumb="h-[15px]" />
      <div className="mt-[5px]"><SectionHead label="Block Definition ..." icon={<BddIcon />} /></div>
      <PaletteGroup items={BLOCK_DEFINITION} thumb="h-[10px]" />
      <div className="mt-1 flex flex-col gap-[3px]">
        <SectionHead label="Internal Block Di..." icon={<IbdIcon />} />
        <SectionHead label="Requirements Di..." icon={<ReqDiagramIcon />} />
      </div>
      <PaletteGroup items={REQUIREMENTS} thumb="h-[27px]" />
      <div className="mt-[5px] flex flex-col gap-[3px]">
        <SectionHead label="Information Flows" icon={<ProfileIcon />} />
        <SectionHead label="Use Case Diagram" icon={<UseCaseIcon />} />
        <SectionHead label="Profiling Mechani..." icon={<ProfileIcon />} />
      </div>
      <button aria-label="Scroll palette up" className="flex flex-1 items-center justify-center">
        <Svg w={12} h={8} stroke="none"><path d="M1 7l5-6 5 6z" fill="#333" /></Svg>
      </button>
    </aside>
  );
}

/* ---------- diagram ---------- */

function DiagramToolbar() {
  return (
    <div className="flex h-[25px] shrink-0 items-center border-b border-[#aaa] bg-linear-to-b from-[#fdfdfd] to-[#f0f0f0] pl-[2px]">
      <ToolButton wide label="Back"><ArrowIcon /></ToolButton>
      <ToolButton label="Forward"><ArrowIcon flip /></ToolButton>
      <span className="w-[3px]" />
      <Grip />
      <ToolButton wide label="Select in tree"><FoldersIcon /></ToolButton>
      <span className="w-px" />
      <Grip />
      <ToolButton wide label="Copy"><CopyIcon /></ToolButton>
      <ToolButton wide label="Paste"><PasteIcon /></ToolButton>
      <ToolButton wide label="Delete"><TrashIcon /></ToolButton>
      <ToolButton wide label="Delete symbols"><TrashAllIcon /></ToolButton>
      <Grip />
      <ToolButton label="Layout"><LayoutTreeIcon /></ToolButton>
      <More label="Layout options" />
      <ToolButton label="Align"><AlignIcon /></ToolButton>
      <More tight label="Align options" />
      <ToolButton wide label="Oblique path"><PathIcon d="M3 14L13 3" ends="M2 12h3v3H2zM11 2h3v3h-3z" /></ToolButton>
      <ToolButton wide label="Rectilinear path"><PathIcon d="M3.500 13V3.500h10" ends="M2 2h3v3H2zM2 12h3v3H2zM11 2h3v3h-3z" /></ToolButton>
      <ToolButton label="Bent path"><PathIcon d="M2 3.500h11L3 14" ends="M1 2h3v3H1zM2 12h3v3H2zM11 2h3v3h-3z" /></ToolButton>
      <ToolButton wide label="Curved path"><PathIcon d="M3 13c0-6 4-9 10-9" ends="M2 12h3v3H2zM11 2h3v3h-3z" /></ToolButton>
      <ToolButton wide label="Reset path"><PathIcon d="M2 3.500h4M3 14L13 3M10 13.500h5" ends="M2 12h3v3H2zM11 2h3v3h-3z" /></ToolButton>
      <span className="w-[3px]" />
      <Grip />
      <ToolButton label="Fill color"><BucketIcon /></ToolButton>
      <More tight label="Fill options" />
      <ToolButton label="Bring to front"><FrontIcon front /></ToolButton>
      <ToolButton wide label="Send to back"><FrontIcon /></ToolButton>
      <ToolButton wide label="Check data"><CylinderIcon /></ToolButton>
      <span className="w-px" />
      <Grip />
      <ToolButton wide label="Split"><SplitIcon /></ToolButton>
      <ToolButton wide label="Diagram frame"><FrameIcon /></ToolButton>
      <ToolButton wide label="Image"><ImageIcon /></ToolButton>
      <ToolButton wide label="Shape"><GrayBoxIcon /></ToolButton>
      <span className="w-px" />
      <Grip />
      <ToolButton wide label="Validate"><ValidateIcon /></ToolButton>
      <span className="w-[3px]" />
      <Grip />
      <ToolButton wide label="Fit in window"><ZoomIcon mark="M4.500 4.500h5v5h-5z" /></ToolButton>
      <ToolButton wide label="Actual size"><ZoomIcon mark="1:1" /></ToolButton>
      <ToolButton label="Zoom in"><ZoomIcon mark="M4 7h6M7 4v6" /></ToolButton>
      <ToolButton wide label="Zoom out"><ZoomIcon mark="M4 7h6" /></ToolButton>
      <div className="relative ml-px h-[21px] w-[55px] border border-[#ddd] bg-white">
        <select aria-label="Zoom level" className={`h-full w-full appearance-none text-[12px] ${BAR}`} defaultValue="260%">
          <option>260%</option>
        </select>
        <span className="pointer-events-none absolute top-2 right-px"><Svg w={8} h={6} stroke="#777"><path d="M1 1l3 3 3-3" /></Svg></span>
      </div>
      <Grip />
      <ToolButton label="View"><ViewIcon /></ToolButton>
      <More label="View options" />
      <Grip />
      <ToolButton wide label="Simulate"><PlayIcon fill="#d2d2f2" stroke="#55558a" /></ToolButton>
      <More label="Simulate options" />
    </div>
  );
}

const NODE = "absolute border border-[#8f7a52] bg-linear-to-br from-[#e3d3a0] to-[#fbf6d6] text-center shadow-[2px_2px_0_#b4b0ac]";

function Node({ place, stereotype, name, children }: { place: string; stereotype: string; name: string; children?: ReactNode }) {
  return (
    <div className={`${NODE} ${place}`}>
      <p className="relative z-10 h-4">{stereotype}</p>
      <p className="relative z-10 h-4 text-[12px] font-bold">{name}</p>
      {children}
    </div>
  );
}

function Diagram() {
  return (
    <div className={`relative flex-1 overflow-hidden border-t border-l border-[#555] bg-white text-[11px] leading-4 text-[#111] ${ARIAL}`}>
      <div className="flex h-[17px] w-[151px] items-center pl-[7px] whitespace-nowrap">
        <b className="mr-[5px]">bdd</b> [Model] Model [ Model ]
      </div>
      <svg className="absolute top-0 left-0" width="640" height="300" viewBox="0 0 640 300" fill="none" stroke="#444" aria-hidden="true">
        <path d="M0 16.500h145l6-6V0" />
        <path d="M122.500 139v102M144.500 139v55.500h174.500V241" />
        <path d="M119 236l3.500 5 3.500-5M315.500 236l3.500 5 3.500-5" />
        <path d="M122.500 138.500l2.500 5.500-2.500 6-2.500-6zM144.500 138.500l2.500 5.500-2.500 6-2.500-6z" fill="#333" />
      </svg>

      <Node place="top-[103px] left-[104px] h-9 w-[84px] pt-px pr-[2px]" stereotype="«block»" name="Fuel System" />
      <Node place="top-[241px] left-[52px] h-[43px] w-[85px] pt-[2px] pr-[10px]" stereotype="«block»" name="engine" />
      <Node place="top-[241px] left-[278px] h-[43px] w-[85px] pt-[2px] pl-1" stereotype="«block»" name="tank" />
      <span className="absolute top-[225px] left-[85px]">engine</span>
      <span className="absolute top-[225px] left-[293px]">tank</span>
      <span className="absolute top-[232px] left-[147px]">«proxy»</span>
      <span className="absolute top-[248px] left-[153px]">p1</span>
      <span className="absolute top-[229px] left-[226px]">«proxy»</span>
      <span className="absolute top-[245px] left-[249px]">p1</span>
      <span className="absolute top-[256px] left-[127px] h-[17px] w-[17px] border border-[#5d8a6a] bg-linear-to-br from-[#bfdccb] to-[#eef5ee]" />
      <span className="absolute top-[254px] left-[270px] h-[17px] w-[17px] border border-[#5d8a6a] bg-linear-to-br from-[#bfdccb] to-[#eef5ee]" />

      <Node place="top-[146px] left-[518px] h-[69px] w-[94px] pt-[2px] pr-[2px]" stereotype="«interfaceBlock»" name="fuel IF">
        <div className="-mr-[2px] border-t border-[#8f7a52] text-left">
          <p className="h-[14px] text-center text-[10px] text-[#8c8468] italic">flow properties</p>
          <p className="pl-[3px] leading-3">inout flow1</p>
        </div>
        <span className="absolute top-[18px] left-[3px] h-[13px] w-[85px] border border-dashed border-[#b8ab82]" />
      </Node>
      <svg className="absolute top-[140px] left-[511px]" width="110" height="82" viewBox="0 0 110 82" fill="none" stroke="#222" aria-hidden="true">
        <path d="M1 1h6v6H1zM99 1h6v6h-6zM1 73h6v6H1zM99 73h6v6h-6z" fill="#000" stroke="none" />
        <path d="M.5 10.500h8v8h-8zM.5 51.500h8v8h-8z" fill="#fff" />
        <path d="M2 14.500h6" strokeDasharray="1 1" />
        <path d="M2.500 55.500h5" />
        <circle cx="103.500" cy="14.500" r="4.500" fill="#000" />
        <path d="M101 14.500h5M103.500 12v5" stroke="#fff" />
        <circle cx="103.500" cy="56.500" r="4" fill="#fff" />
        <path d="M101.500 56.500h4M103.500 54.500v4" />
        <path d="M12.500 70.500h6v5h-6zM14 74l3-2" fill="#eee" stroke="#555" />
      </svg>

      <Node place="top-[285px] left-[525px] h-[93px] w-[85px] pt-px" stereotype="«block»" name="fuel">
        <div className="border-t border-[#8f7a52] text-left leading-3">
          <p className="h-[14px] text-center text-[10px] leading-4 text-[#8c8468] italic">values</p>
          <div className="pl-[3px]">
            <p>fluid density</p>
            <p>pressure</p>
            <p>temperature</p>
          </div>
        </div>
      </Node>

      <svg className="absolute top-[182px] left-[657px]" width="12" height="18" viewBox="0 0 12 18" fill="#fff" stroke="#666" aria-hidden="true">
        <path d="M1.500 1v12l3-3 2 5 2-1-2-4h4z" />
      </svg>
    </div>
  );
}

function DiagramPane() {
  return (
    <main className="flex min-w-0 flex-1 flex-col border-t border-r-4 border-l border-t-[#999] border-r-[#d0d0d0] border-l-[#888]">
      <div className="flex h-[19px] shrink-0 items-center border-b border-[#ccc] bg-linear-to-r from-[#f2f2f2] to-[#fcfcfc]">
        <button className="flex h-full w-[86px] items-center border-r border-[#ccc] bg-white font-bold">
          <Svg w={12} h={18} stroke="#c4c4c4"><path d="M0 0h12L1 18H0z" fill="#eee" stroke="none" /><path d="M0 18L10 .5h2" /></Svg>
          <BddIcon />
          <span className="mr-1 ml-1 pt-px">Model</span>
          <Svg w={12} h={10} stroke="#111"><path d="M2.500 1.500l7 7M9.500 1.500l-7 7" strokeWidth="1.800" /></Svg>
        </button>
        <span className="flex-1" />
        <button aria-label="Previous tab" className="w-[17px]"><Svg w={10} h={10} stroke="#222"><path d="M6.500 1.500v7L2.500 5z" /></Svg></button>
        <button aria-label="Next tab" className="w-4"><Svg w={10} h={10} stroke="#222"><path d="M3.500 1.500v7l4-3.500z" /></Svg></button>
        <button aria-label="Tab list" className="mr-px w-3"><Svg w={10} h={10} stroke="#333"><path d="M1.500.5h7v9h-7z" fill="#aaa" /><path d="M3 3h4M3 5h4M3 7h4" /></Svg></button>
      </div>
      <DiagramToolbar />
      <div className="flex min-h-0 flex-1 border-b-4 border-[#d8d8d8]">
        <Palette />
        <div className="flex min-w-0 flex-1 flex-col border-l border-[#aaa] bg-white pt-1 pl-1">
          <div className="flex min-h-0 flex-1">
            <Diagram />
            <div className="flex w-4 flex-col items-center bg-[#f0f0f0]">
              <span className="flex h-[12px] items-center"><Chevron dir="up" /></span>
              <span className="h-[121px] w-full bg-[#cdcdcd]" />
              <span className="mt-auto flex h-[16px] items-center"><Chevron dir="down" /></span>
            </div>
          </div>
          <div className="mr-4 flex h-4 items-center bg-[#f0f0f0]">
            <Chevron dir="left" />
            <span className="ml-[2px] h-full w-[241px] bg-[#cdcdcd]" />
            <span className="mr-[2px] ml-auto"><Chevron dir="right" /></span>
          </div>
        </div>
      </div>
    </main>
  );
}

/* ---------- bottom bars ---------- */

function StatusBar() {
  return (
    <footer className="flex h-[19px] shrink-0 items-center border-t border-[#bbb] bg-[#f0f0f0] pl-[2px]">
      <span className="flex-1">Ready</span>
      <button aria-label="Background tasks" className="w-4"><Svg stroke="#555"><path d="M1.500 2.500h8l4 3v8h-12zM2 5c4-4 10-3 12 2M4 8c3-2 7-1 8 4M5 11h5M7 7l5 6v2h3v-4" /></Svg></button>
      <span className="flex w-[30px] justify-center">
        <Svg stroke="#aaa"><path d="M8 2v4M8 10v4M2 8h4M10 8h4M4 4l2.500 2.500M9.500 9.500L12 12M12 4L9.500 6.500M6.500 9.500L4 12" strokeWidth="1.300" /></Svg>
      </span>
      <span className="flex h-full w-[50px] items-center justify-center border-l border-[#bbb] bg-[#e6e6e6]">18836</span>
      <span className={`h-full w-[152px] bg-[#fafafa] pl-[5px] leading-[19px] whitespace-pre ${ARIAL}`}>570M of 1358M  (max 3556M)</span>
      <button aria-label="Run garbage collector" className="w-[21px]"><Svg stroke="#444"><path d="M3.500 6.500h9l-1 8h-7zM2 5.500h12M4 4c0-3 4-3 4 0 0-3 4-3 4 0M6.500 8v5M9.500 8v5" fill="#ccc" /></Svg></button>
    </footer>
  );
}

const OutlookIcon = () => (
  <Svg w={24} h={24} stroke="none"><path d="M1 3l12-2v22L1 21z" fill="#0f6fc6" /><path d="M13 7h9v10h-9z" fill="#fff" /><path d="M13 8l4.500 5L22 8" stroke="#0f6fc6" /><ellipse cx="7" cy="12" rx="2.500" ry="3.500" stroke="#fff" strokeWidth="1.800" /></Svg>
);
const NotepadIcon = () => (
  <Svg w={24} h={24} stroke="none"><path d="M8 2l11 2-4 18L2 19z" fill="#8cc4d2" /><path d="M8 2l11 2-2 8-12-2z" fill="#d8eef2" /><path d="M19 4l2 16-6 2z" fill="#4d8797" /><path d="M8 2l11 2" stroke="#eee" strokeWidth="1.500" strokeDasharray="1 1" /></Svg>
);
const NotepadPlusIcon = () => (
  <Svg w={24} h={24} stroke="none"><path d="M3 2h12l4 4v16H3z" fill="#f4f4ea" /><path d="M3 13h16v9H3z" fill="#5cb82f" /><path d="M5 11c2-4 4-2 5 0s4-3 6 1c-2 6-9 6-11-1z" fill="#8fcf4a" /><path d="M22 1l-5 17" stroke="#d98a2b" strokeWidth="2" /><path d="M6 10h4M7 13h7" stroke="#333" strokeWidth="1.300" /></Svg>
);
const FirefoxIcon = () => (
  <Svg w={24} h={24} stroke="none"><circle cx="12" cy="12.500" r="10.500" fill="#ff9a1f" /><path d="M2 9c0-4 3-7 3-7l3 3c4-2 9 0 9 5s-3 6-6 6-4-1-5-2c0 4 6 7 11 3-3 6-14 6-15-8z" fill="#e8392b" /><path d="M13 1c5 1 10 6 9.500 12C21 10 18 7 14 6z" fill="#ffd43a" /><circle cx="12.500" cy="10.500" r="4.500" fill="#2b5fc4" /><path d="M6 8l4-1 2 3-3 3-3-1z" fill="#ff7a1a" /></Svg>
);
const MagicDrawIcon = () => (
  <Svg w={24} h={24} stroke="#9cc0ea"><path d="M3 2h18v20H3z" fill="#13377f" strokeWidth="1.500" /><path d="M5 18L22 8M8 4l12 17M12 9L6 20" stroke="#fff" strokeWidth="1.400" /></Svg>
);
const MagicDrawGreenIcon = () => (
  <Svg w={24} h={24} stroke="#eee"><path d="M3 2h17v20H3z" fill="#5d7f4d" strokeWidth="2" /><path d="M5 13l17-5M9 5l8 12M17 5l-7 14" strokeWidth="1.300" /></Svg>
);
const PowerPointIcon = () => (
  <Svg w={24} h={24} stroke="none"><path d="M12 4h10v16H12z" fill="#fff" /><path d="M15 8h5M15 14h5M15 17h5" stroke="#d04727" strokeWidth="1.500" /><path d="M1 3l12-2v22L1 21z" fill="#d04727" /><path d="M5.500 17V8h3a2.500 2.500 0 010 5h-3" stroke="#fff" strokeWidth="1.800" /></Svg>
);
const ExplorerIcon = () => (
  <Svg w={24} h={24} stroke="none"><path d="M2 3h7l2 2h11v15H2z" fill="#f7d774" /><path d="M2 8h20v12H2z" fill="#fbe596" /><path d="M6 21v-8h12v8h-3v-5H9v5z" fill="#3d9fd6" /></Svg>
);
const SkypeIcon = () => (
  <Svg w={24} h={24} stroke="none"><circle cx="8" cy="8" r="6.500" fill="#00aff0" /><circle cx="16" cy="16" r="6.500" fill="#00aff0" /><circle cx="12" cy="12" r="9.500" fill="#00aff0" /><path d="M16 9c-1-3-8-3-8 .5C8 13 16 11 16 15c0 3.500-7 3-8.500 0" stroke="#fff" strokeWidth="2.300" /></Svg>
);
const WordIcon = () => (
  <Svg w={24} h={24} stroke="none"><path d="M12 3h10v17H12z" fill="#fff" /><path d="M14 6h6M14 9h6M14 12h6M14 15h6M14 18h6" stroke="#2b5797" /><path d="M1 3l12-2v22L1 21z" fill="#2b5797" /><path d="M3.500 8l1.500 8 2-7 2 7 1.500-8" stroke="#fff" strokeWidth="1.500" /></Svg>
);
const PaintIcon = () => (
  <Svg w={24} h={24} stroke="none"><path d="M2 15C2 8 8 4 15 5c5 1 6 6 2 8-3 1-2 3-2 5-1 4-13 4-13-3z" fill="#d5e2ea" /><circle cx="6" cy="14" r="2" fill="#d44" /><circle cx="9" cy="9" r="1.800" fill="#4a4" /><circle cx="14" cy="8" r="1.600" fill="#e9b32e" /><circle cx="9" cy="18" r="1.800" fill="#2f66bb" /><path d="M20 1l-4 20" stroke="#c98a48" strokeWidth="2.500" /></Svg>
);
const GearsIcon = () => (
  <Svg w={24} h={24} stroke="#2a56c8"><circle cx="13" cy="13" r="4" strokeWidth="2" /><circle cx="13" cy="13" r="6" strokeWidth="2" strokeDasharray="2 2.700" /><circle cx="4.500" cy="18" r="3" strokeWidth="1.500" /><circle cx="16" cy="4" r="2.500" stroke="#7a9fe6" strokeWidth="1.500" /><circle cx="20" cy="20" r="2" /></Svg>
);
const CamtasiaIcon = () => (
  <Svg w={24} h={28} stroke="none"><rect x="0" y="1" width="24" height="26" rx="2" fill="#ee4f41" /><path d="M18 10V7H9L7 9v10l2 2h9v-3" stroke="#fff" strokeWidth="3" /></Svg>
);

const TASKS: { name: string; icon: ReactNode; state?: "running" | "active" }[] = [
  { name: "Outlook", icon: <OutlookIcon />, state: "running" },
  { name: "Notepad", icon: <NotepadIcon /> },
  { name: "Notepad++", icon: <NotepadPlusIcon /> },
  { name: "Firefox", icon: <FirefoxIcon /> },
  { name: "Cameo Systems Modeler", icon: <JetIcon /> },
  { name: "MagicDraw", icon: <MagicDrawGreenIcon /> },
  { name: "Cameo Enterprise", icon: <JetIcon /> },
  { name: "Cameo Simulation", icon: <JetIcon /> },
  { name: "PowerPoint", icon: <PowerPointIcon /> },
  { name: "File Explorer", icon: <ExplorerIcon /> },
  { name: "Skype", icon: <SkypeIcon />, state: "running" },
  { name: "MagicDraw Reader", icon: <MagicDrawIcon /> },
  { name: "Word", icon: <WordIcon /> },
  { name: "Paint", icon: <PaintIcon /> },
  { name: "Services", icon: <GearsIcon /> },
  { name: "Current model", icon: <JetIcon />, state: "active" },
  { name: "Camtasia", icon: <CamtasiaIcon />, state: "running" },
];

function Taskbar() {
  return (
    <div className={`flex h-[81px] shrink-0 items-stretch bg-[#070807] text-[12px] text-[#eee] ${SEGOE}`}>
      <button aria-label="Start" className="flex w-12 items-center justify-center">
        <Svg w={18} h={18} stroke="none"><path d="M1 3l7-1v6.500H1zM9 2l8-1v7.500H9zM1 9.500h7V16l-7-1zM9 9.500h8V17l-8-1z" fill="#fff" /></Svg>
      </button>
      <label className="flex w-[344px] items-center bg-[#f1f1f1] pl-[9px] text-[#333]">
        <Svg w={26} h={26} stroke="#000"><circle cx="13" cy="13" r="10.500" strokeWidth="3" /></Svg>
        <input aria-label="Search" placeholder="Type here to search" className="mx-[9px] min-w-0 flex-1 bg-transparent text-[14px] outline-none placeholder:text-[#333]" />
        <Svg w={14} h={20} stroke="#222" className="mr-[13px]"><rect x="4.500" y="1.500" width="5" height="11" rx="2.500" /><path d="M1.500 10c0 7 11 7 11 0M7 15.500V19M4 18.500h6" /></Svg>
      </label>
      <button aria-label="Task view" className="flex w-12 items-center justify-center">
        <Svg w={18} h={18} stroke="#ccc"><path d="M1.500 4.500h10v8h-10zM1.500 1v2h10V1M1.500 17v-2h10v2M15.500 1v16" /><path d="M14 6h3v3h-3z" fill="#ccc" stroke="none" /></Svg>
      </button>
      <div className="ml-[2px] grid w-[496px] grid-cols-10 grid-rows-2">
        {TASKS.map((t) => (
          <button
            key={t.name}
            aria-label={t.name}
            className={`relative flex items-center justify-center ${t.state === "active" ? "bg-[#424242]" : ""}`}
          >
            {t.icon}
            {t.state && (
              <span className={`absolute bottom-0 h-[2px] bg-[#76aee0] ${t.state === "active" ? "inset-x-0" : "inset-x-1"}`} />
            )}
          </button>
        ))}
      </div>
      <div className="ml-auto flex items-center">
        <button aria-label="People" className="flex w-[52px] justify-center">
          <Svg w={18} h={18} stroke="#eee"><circle cx="6" cy="8.500" r="2.500" /><path d="M2 17l2-5h4l2 5" /><circle cx="12" cy="4" r="2.500" /><path d="M10 8l2-1.500 2.500 1.500 1.500 5" /></Svg>
        </button>
        <button aria-label="Show hidden icons" className="flex w-7 justify-center">
          <Svg w={14} h={10} stroke="#eee"><path d="M1.500 8L7 2l5.500 6" strokeWidth="1.300" /></Svg>
        </button>
        <div className="grid h-full w-[66px] grid-cols-2 grid-rows-2 place-items-center">
          <Svg w={18} h={18} stroke="none"><path d="M5 2l3.500 2L5 6 2 4zM13 2l3 2-3 2-3.500-2zM13 7l3 2-3 2-3.500-2z" fill="#fff" /><path d="M1 6h8v11H1z" fill="#d8202c" /><path d="M3.500 9.500L5.500 8v7" stroke="#fff" strokeWidth="1.300" /></Svg>
          <Svg w={18} h={18} stroke="#eee"><path d="M6.500 7.500h9v6h-9zM16.500 9v3M1.500 4.500h4v3l-2 2-2-2zM2.500 2v2M4.500 2v2M3.500 9v4h3" /><path d="M8 9h6v3H8z" fill="#eee" stroke="none" /></Svg>
          <Svg w={18} h={18} stroke="#eee"><path d="M1.500 7h3l3-4v12l-3-4h-3zM10 6c2 2 2 4 0 6M12.500 4c3 3 3 7 0 10M15 2c3.500 4 3.500 10 0 14" /></Svg>
          <Svg w={18} h={18} stroke="#ddd"><path d="M3 16C3 9 8 4 15 4M6 16c0-5 4-9 9-9M9 16c0-3 3-6 6-6M12 16c0-2 1-3 3-3" strokeWidth="1.300" /></Svg>
        </div>
        <button className="w-[34px] text-center">ENG</button>
        <button className="w-[78px] text-center leading-6">
          1:17 AM<br />Tuesday<br />6/26/2018
        </button>
        <button aria-label="Notifications" className="flex w-9 justify-center">
          <Svg w={18} h={18} stroke="#eee"><path d="M1.500 1.500h15v10M1.500 1.500v12h7M9 16c4 1 7-1 7-5-3 0-4 2-3 5" strokeWidth="1.200" /></Svg>
        </button>
        <span className="ml-3 h-full w-1 border-l border-[#555]" />
      </div>
    </div>
  );
}

export default function App() {
  return (
    <div className={`flex h-screen min-h-[720px] flex-col overflow-hidden bg-[#f0f0f0] text-[11px] leading-4 text-[#222] ${UI}`}>
      <TitleBar />
      <MenuBar />
      <MainToolbar />
      <div className="flex min-h-0 flex-1">
        <div className="flex w-[330px] shrink-0 flex-col pr-[3px]">
          <Containment />
          <ZoomPane />
        </div>
        <DiagramPane />
      </div>
      <StatusBar />
      <Taskbar />
    </div>
  );
}
